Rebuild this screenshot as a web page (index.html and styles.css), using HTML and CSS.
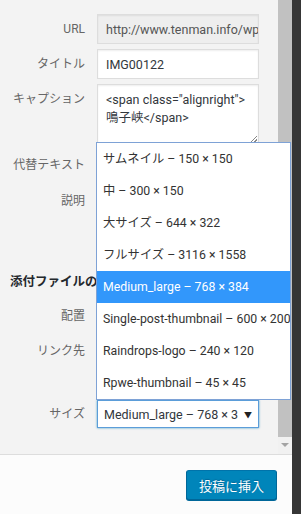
FILE: index.html
```html
<!DOCTYPE html>
<html lang="ja">
<head>
    <meta charset="UTF-8">
    <meta name="viewport" content="width=device-width, initial-scale=1.0">
    <title>添付ファイルの詳細</title>
    <link rel="stylesheet" href="styles.css">
</head>
<body>
    <div class="frame">
        <div class="panel">
            <div class="scroll-area">
                <div class="settings">
                    <div class="row">
                        <label class="label">URL</label>
                        <div class="field field-readonly">http://www.tenman.info/wp-content/uploads/IMG00122.jpg</div>
                    </div>
                    <div class="row">
                        <label class="label">タイトル</label>
                        <div class="field">IMG00122</div>
                    </div>
                    <div class="row">
                        <label class="label">キャプション</label>
                        <div class="field field-area">&lt;span class="alignright"&gt;<br>鳴子峡&lt;/span&gt;<span class="resize"></span></div>
                    </div>
                    <div class="row">
                        <label class="label">代替テキスト</label>
                        <div class="field"></div>
                    </div>
                    <div class="row">
                        <label class="label">説明</label>
                        <div class="field field-area"></div>
                    </div>

                    <h2 class="section-title">添付ファイルの表示設定</h2>

                    <div class="row">
                        <label class="label">配置</label>
                        <div class="field">右</div>
                    </div>
                    <div class="row">
                        <label class="label">リンク先</label>
                        <div class="field">なし</div>
                    </div>
                    <div class="row row-size">
                        <label class="label label-size">サイズ</label>
                        <div class="select is-open">
                            <span class="select-text">Medium_large – 768 × 384</span>
                            <span class="select-arrow">▼</span>
                        </div>
                    </div>
                </div>

                <div class="scrollbar">
                    <div class="scrollbar-thumb"></div>
                    <div class="scrollbar-arrow"></div>
                </div>

                <ul class="dropdown">
                    <li>サムネイル – 150 × 150</li>
                    <li>中 – 300 × 150</li>
                    <li>大サイズ – 644 × 322</li>
                    <li>フルサイズ – 3116 × 1558</li>
                    <li class="selected">Medium_large – 768 × 384</li>
                    <li>Single-post-thumbnail – 600 × 200</li>
                    <li>Raindrops-logo – 240 × 120</li>
                    <li>Rpwe-thumbnail – 45 × 45</li>
                </ul>
            </div>

            <div class="footer">
                <button class="btn-primary">投稿に挿入</button>
            </div>
        </div>
        <div class="edge"></div>
    </div>
</body>
</html>
```

FILE: styles.css
```css
* {
    margin: 0;
    padding: 0;
    box-sizing: border-box;
}

body {
    font-family: Roboto, "Noto Sans CJK JP", sans-serif;
    font-size: 12px;
    color: #32373c;
    background-color: #333;
    width: 301px;
    height: 514px;
    overflow: hidden;
}

.frame {
    display: flex;
    height: 514px;
}

.panel {
    width: 292px;
    display: flex;
    flex-direction: column;
}

.edge {
    width: 9px;
    background-color: #363636;
}

.scroll-area {
    position: relative;
    height: 454px;
    display: flex;
    background-color: #f3f3f3;
}

.settings {
    width: 278px;
    padding-top: 14px;
    overflow: hidden;
}

.row {
    display: grid;
    grid-template-columns: 85px 162px;
    column-gap: 12px;
    margin-bottom: 4px;
}

.label {
    color: #666;
    text-align: right;
    line-height: 31px;
    white-space: nowrap;
}

.field {
    height: 30px;
    padding: 0 8px;
    line-height: 29px;
    font-size: 12.5px;
    background-color: #fff;
    border: 1px solid #ddd;
    box-shadow: inset 0 1px 2px rgba(0,0,0,0.07);
    color: #32373c;
    white-space: nowrap;
    overflow: hidden;
}

.field-readonly {
    background-color: #eee;
    color: #555;
}

.field-area {
    position: relative;
    height: 61px;
    padding-top: 6px;
    line-height: 18px;
}

.resize {
    position: absolute;
    right: 1px;
    bottom: 1px;
    width: 7px;
    height: 7px;
    background: linear-gradient(135deg, transparent 45%, #888 45%, #888 55%, transparent 55%, transparent 70%, #888 70%, #888 80%, transparent 80%);
}

.row:nth-child(3) {
    margin-bottom: 5px;
}

.row:nth-child(4) {
    margin-bottom: 5px;
}

.section-title {
    margin: 25px 0 9px 10px;
    font-size: 12.5px;
    font-weight: 700;
    line-height: 20px;
    color: #23282d;
    white-space: nowrap;
}

.row-size {
    margin-top: 33px;
}

.label-size {
    line-height: 29px;
}

.select {
    height: 28px;
    display: flex;
    align-items: center;
    padding: 0 6px;
    background-color: #fff;
    border: 1px solid #5b9dd9;
    box-shadow: 0 0 2px rgba(30,140,190,0.8);
    overflow: hidden;
}

.select-text {
    flex: 1;
    font-size: 12.5px;
    white-space: nowrap;
    overflow: hidden;
    color: #32373c;
}

.select-arrow {
    flex-shrink: 0;
    font-size: 8px;
    color: #222;
    padding-left: 6px;
}

.scrollbar {
    width: 14px;
    display: flex;
    flex-direction: column;
    background-color: #f1f1f1;
}

.scrollbar-thumb {
    height: 437px;
    background-color: #c1c1c1;
}

.scrollbar-arrow {
    margin: 6px auto 0;
    width: 0;
    height: 0;
    border-left: 4px solid transparent;
    border-right: 4px solid transparent;
    border-top: 4px solid #a3a3a3;
}

.dropdown {
    position: absolute;
    left: 96px;
    top: 142px;
    width: 195px;
    list-style: none;
    background-color: #fff;
    border: 1px solid #7ea2d6;
}

.dropdown li {
    height: 32px;
    line-height: 33px;
    padding-left: 6px;
    font-size: 12.3px;
    color: #333;
    white-space: nowrap;
    overflow: hidden;
}

.dropdown li.selected {
    background-color: #3297fb;
    color: #fff;
}

.footer {
    flex: 1;
    display: flex;
    justify-content: flex-end;
    align-items: flex-start;
    padding: 15px 15px 0 0;
    background-color: #fcfcfc;
    border-top: 1px solid #ddd;
}

.btn-primary {
    width: 91px;
    height: 30px;
    font-family: "Noto Sans CJK JP", sans-serif;
    font-size: 13px;
    color: #fff;
    background-color: #0085ba;
    border: 1px solid #0073aa;
    border-color: #0073aa #006799 #006799;
    border-radius: 3px;
    box-shadow: 0 1px 0 #006799;
    text-shadow: 0 -1px 1px #006799;
    cursor: pointer;
}
```
